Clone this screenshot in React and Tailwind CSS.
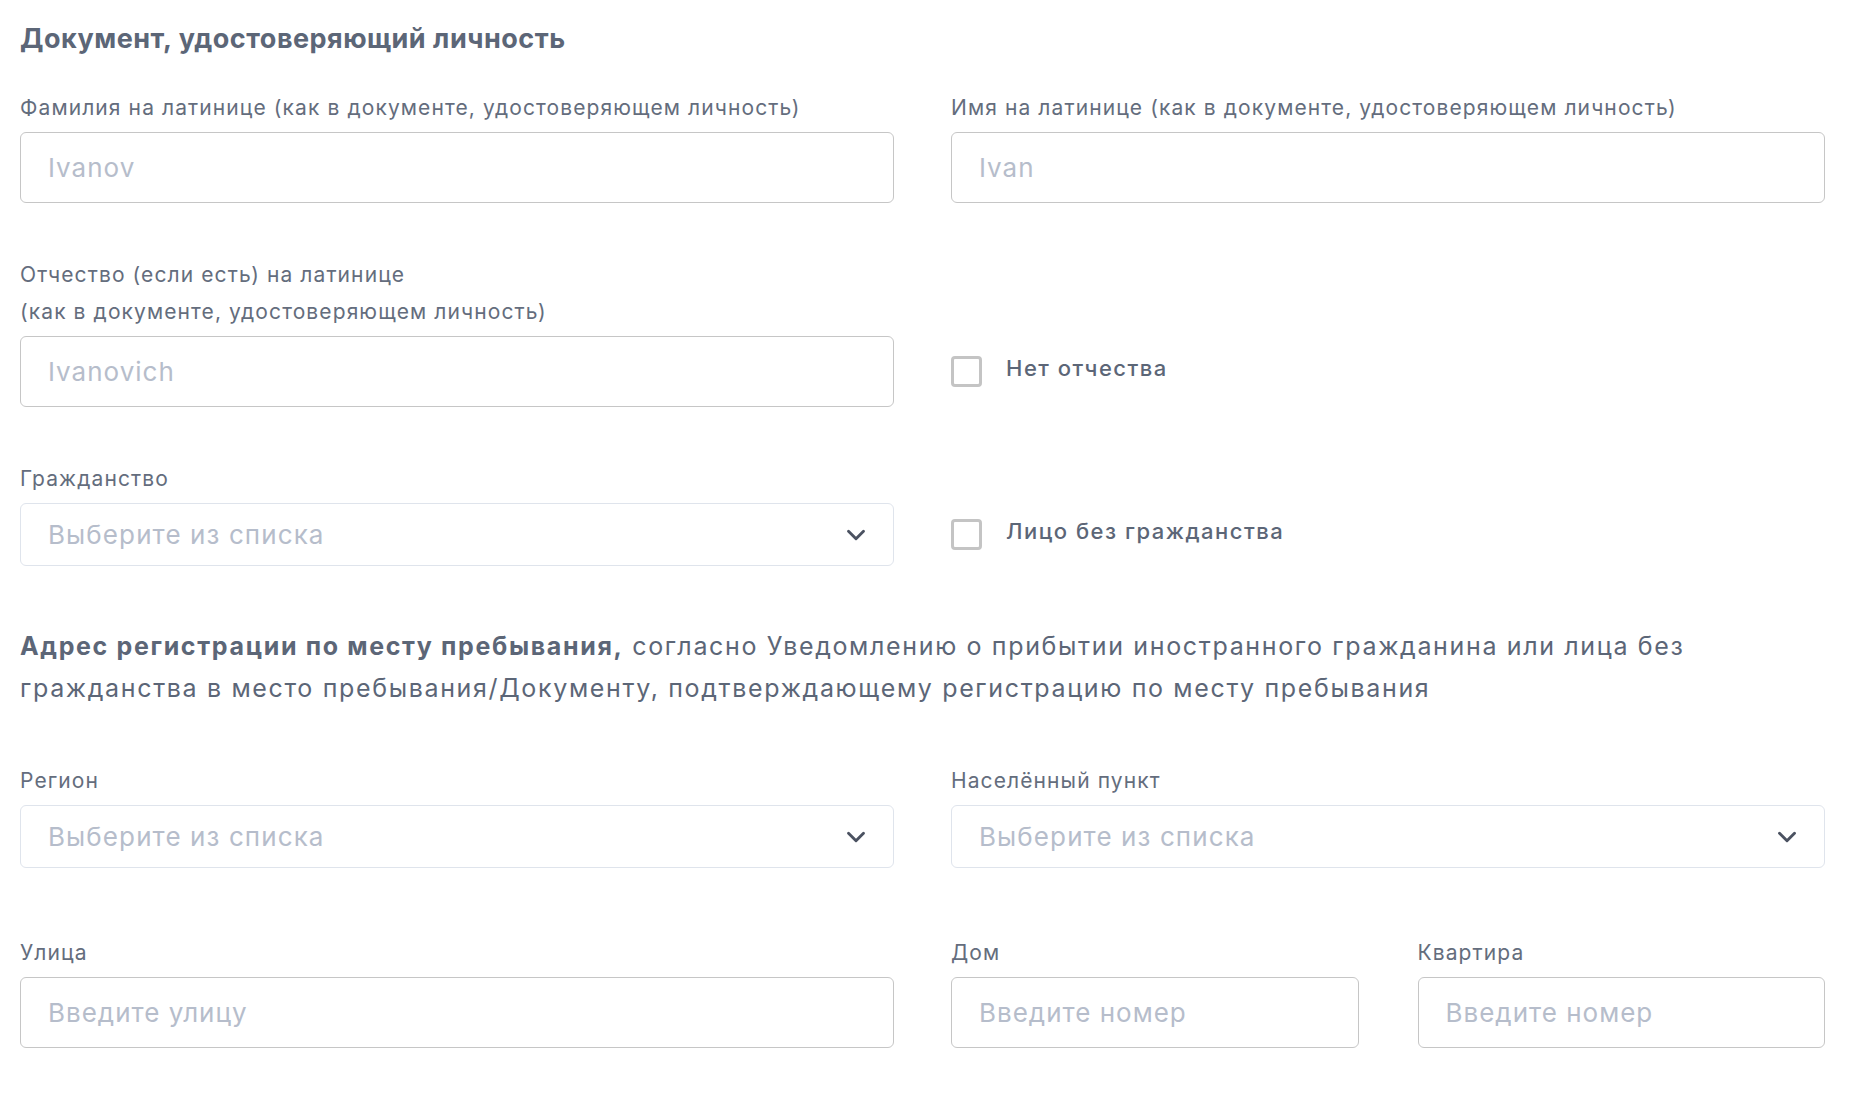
import { ChevronDown } from 'lucide-react'

const FONT = { fontFamily: 'Inter, "Noto Sans", sans-serif' }

function Label({ children }) {
  return (
    <label className="mb-[6px] block text-[21px] leading-[37px] tracking-[1.1px] text-[#646d7d]">
      {children}
    </label>
  )
}

function TextInput({ placeholder }) {
  return (
    <input
      type="text"
      placeholder={placeholder}
      className="block h-[71px] w-full rounded-[6px] border-[1.5px] border-[#c6c6c6] bg-white px-[27px] text-[26px] tracking-[1px] text-[#374151] placeholder:text-[#b6bdcb] focus:outline-none"
    />
  )
}

function Select({ placeholder }) {
  return (
    <button
      type="button"
      className="flex h-[63px] w-full items-center justify-between rounded-[6px] border-[1.5px] border-[#dfe4ec] bg-white pl-[27px] pr-[22px] text-left"
    >
      <span className="text-[26px] tracking-[1.1px] text-[#b6bdcb]">{placeholder}</span>
      <ChevronDown size={30} strokeWidth={2.3} className="text-[#4b5261]" />
    </button>
  )
}

function Checkbox({ label, height }) {
  return (
    <label className={`flex items-center gap-[24px] ${height}`}>
      <span className="block h-[31px] w-[31px] shrink-0 rounded-[4px] border-[3px] border-[#c4c4c4] bg-white" />
      <span className="-mt-[6px] text-[22px] font-medium tracking-[1.5px] text-[#5c6677]">{label}</span>
    </label>
  )
}

export default function App() {
  return (
    <div style={FONT} className="min-h-screen bg-white pl-[20px] pr-[27px] pt-[21px]">
      <h2 className="text-[27px] font-bold leading-[36px] tracking-[0.5px] text-[#5c6677]">
        Документ, удостоверяющий личность
      </h2>

      <div className="mt-[32px] grid grid-cols-2 gap-x-[57px]">
        <div>
          <Label>Фамилия на латинице (как в документе, удостоверяющем личность)</Label>
          <TextInput placeholder="Ivanov" />
        </div>
        <div>
          <Label>Имя на латинице (как в документе, удостоверяющем личность)</Label>
          <TextInput placeholder="Ivan" />
        </div>
      </div>

      <div className="mt-[53px] grid grid-cols-2 items-end gap-x-[57px]">
        <div>
          <Label>
            Отчество (если есть) на латинице
            <br />
            (как в документе, удостоверяющем личность)
          </Label>
          <TextInput placeholder="Ivanovich" />
        </div>
        <Checkbox label="Нет отчества" height="h-[71px]" />
      </div>

      <div className="mt-[53px] grid grid-cols-2 items-end gap-x-[57px]">
        <div>
          <Label>Гражданство</Label>
          <Select placeholder="Выберите из списка" />
        </div>
        <Checkbox label="Лицо без гражданства" height="h-[63px]" />
      </div>

      <p className="mt-[59px] text-[25px] leading-[42px] tracking-[1.65px] text-[#5c6677]">
        <span className="font-bold">Адрес регистрации по месту пребывания,</span> согласно Уведомлению о
        прибытии иностранного гражданина или лица без
        <br />
        гражданства в место пребывания/Документу, подтверждающему регистрацию по месту пребывания
      </p>

      <div className="mt-[53px] grid grid-cols-2 gap-x-[57px]">
        <div>
          <Label>Регион</Label>
          <Select placeholder="Выберите из списка" />
        </div>
        <div>
          <Label>Населённый пункт</Label>
          <Select placeholder="Выберите из списка" />
        </div>
      </div>

      <div className="mt-[66px] grid grid-cols-2 gap-x-[57px]">
        <div>
          <Label>Улица</Label>
          <TextInput placeholder="Введите улицу" />
        </div>
        <div className="grid grid-cols-2 gap-x-[59px]">
          <div>
            <Label>Дом</Label>
            <TextInput placeholder="Введите номер" />
          </div>
          <div>
            <Label>Квартира</Label>
            <TextInput placeholder="Введите номер" />
          </div>
        </div>
      </div>
    </div>
  )
}
